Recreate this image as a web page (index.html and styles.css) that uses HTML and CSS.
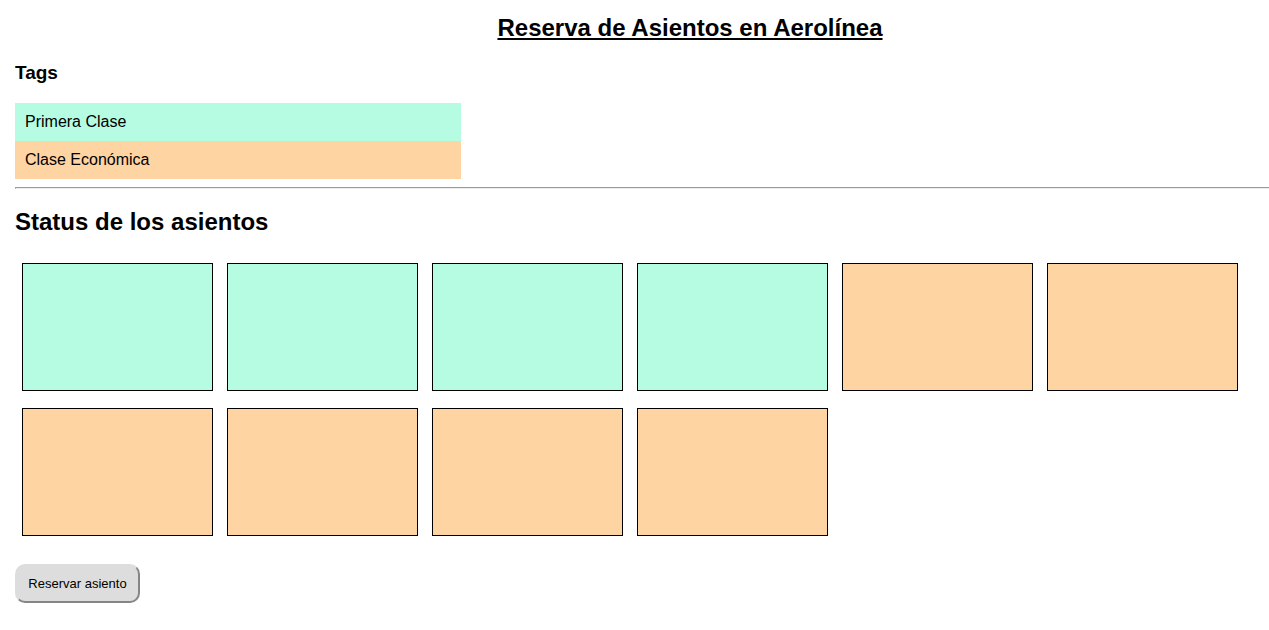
FILE: index.html
```html
<!DOCTYPE html>
<html lang="es">
<head>
<meta charset="utf-8">
<title>Reserva de Asientos en Aerolínea</title>
<link rel="stylesheet" href="styles.css">
</head>
<body>
<main class="page">
  <h1 class="title">Reserva de Asientos en Aerolínea</h1>
  <section>
    <h3 class="tags-title">Tags</h3>
    <div class="tags">
      <div class="tag first">Primera Clase</div>
      <div class="tag economy">Clase Económica</div>
    </div>
  </section>
  <hr class="rule">
  <section>
    <h2 class="status-title">Status de los asientos</h2>
    <div class="seats">
      <div class="seat first"></div>
      <div class="seat first"></div>
      <div class="seat first"></div>
      <div class="seat first"></div>
      <div class="seat economy"></div>
      <div class="seat economy"></div>
      <div class="seat economy"></div>
      <div class="seat economy"></div>
      <div class="seat economy"></div>
      <div class="seat economy"></div>
    </div>
  </section>
  <button class="reserve" type="button">Reservar asiento</button>
</main>
</body>
</html>
```

FILE: styles.css
```css
* {
  box-sizing: border-box;
}

body {
  margin: 0;
  background: #fff;
  color: #000;
  font: 16px/18px "Liberation Sans", Arial, sans-serif;
}

.page {
  padding: 14px 0 24px 15px;
}

.title,
.status-title {
  margin: 0;
  font-size: 24px;
  line-height: 28px;
}

.title {
  padding-left: 96px;
  text-align: center;
  text-decoration: underline;
}

.tags-title {
  margin: 20px 0;
  font-size: 19px;
  line-height: 21px;
}

.tags {
  width: 36%;
  max-width: 446px;
}

.tag {
  padding: 10px;
}

.first {
  background: #b5fce3;
}

.economy {
  background: #ffd4a3;
}

.rule {
  margin: 8px 0 19px;
  border: 1px solid;
  border-color: #9a9a9a #eee #eee #9a9a9a;
  border-right: 0;
}

.seats {
  display: grid;
  grid-template-columns: repeat(6, 1fr);
  gap: 17px 14px;
  padding: 27px 31px 28px 7px;
}

.seat {
  height: 128px;
  border: 1px solid #000;
}

.reserve {
  display: block;
  min-width: 125px;
  padding: 10px;
  border: 2px solid;
  border-color: #ddd #858585 #858585 #ddd;
  border-radius: 10px;
  background: #ddd;
  color: #000;
  font: 13px/15px "Liberation Sans", Arial, sans-serif;
}
```
